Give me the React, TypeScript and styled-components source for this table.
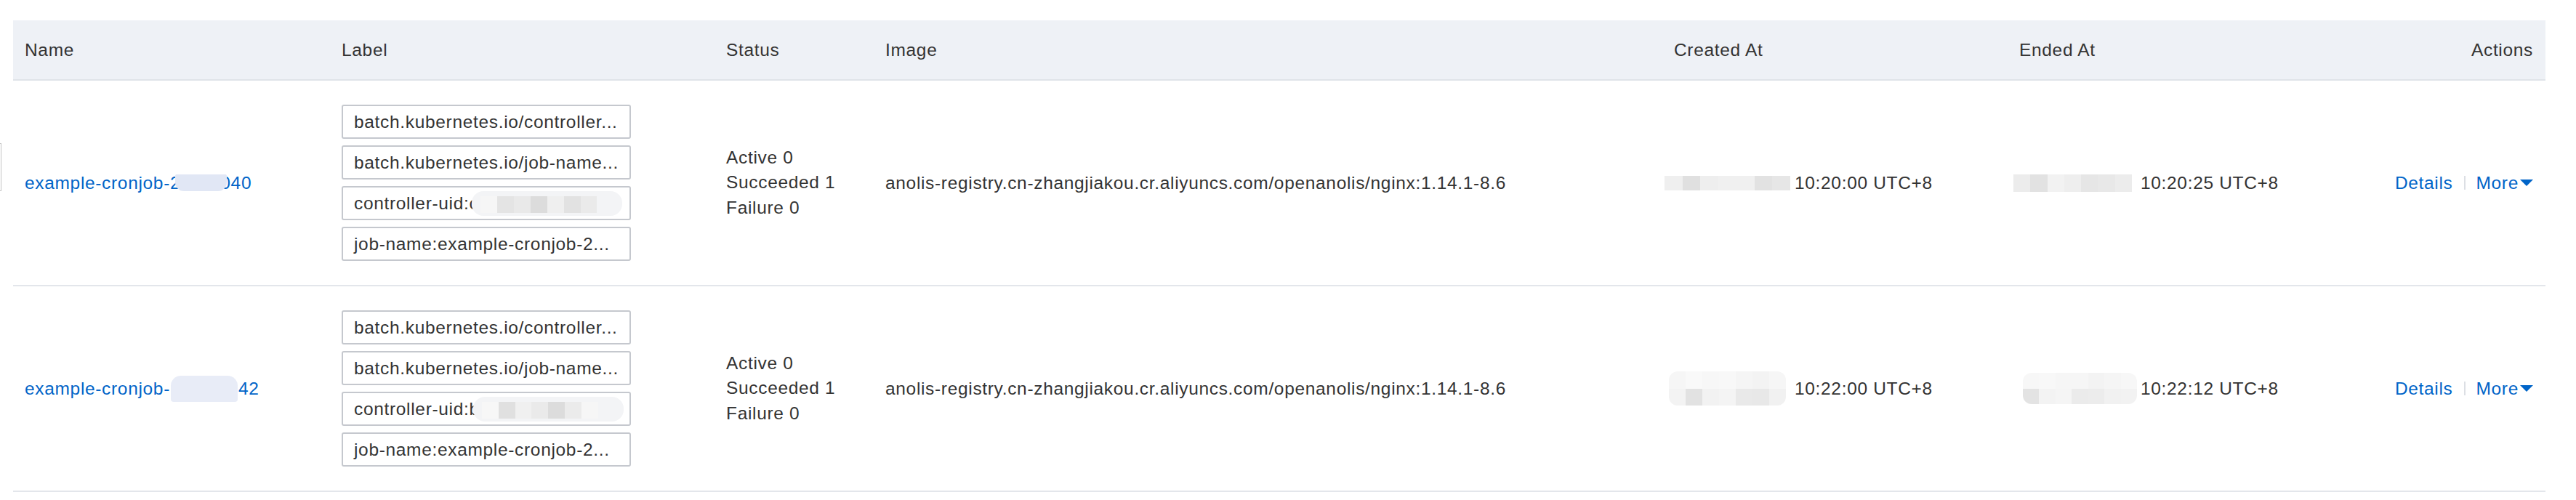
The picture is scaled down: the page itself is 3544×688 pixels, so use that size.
import styled, { createGlobalStyle } from "styled-components"

const COLS = "436px 529px 219px 1085px 475px 1fr 240px"

type Shade = string[][]

type MosaicProps = {
  w: number
  h: number
  rows: Shade
  bg?: string
  radius?: string
  pad?: string
  ml?: number
  mr?: number
}

const Mosaic = ({ w, h, rows, bg = "transparent", radius = "0", pad = "0", ml = 0, mr = 0 }: MosaicProps) => (
  <MosaicBox $w={w} $h={h} $bg={bg} $r={radius} $pad={pad} $ml={ml} $mr={mr}>
    {rows.map((row, i) => (
      <MosaicRow key={i}>
        {row.map((c, j) => (
          <Tile key={j} $c={c} />
        ))}
      </MosaicRow>
    ))}
  </MosaicBox>
)

type Job = {
  prefix: string
  suffix: string
  nameBlur: { w: number; h: number; color: string; radius: string; ml: number; mr: number }
  uidChar: string
  uidTiles: string[]
  created: string
  createdBlur: MosaicProps
  createdGap: number
  ended: string
  endedBlur: MosaicProps
  endedGap: number
}

const jobs: Job[] = [
  {
    prefix: "example-cronjob-2",
    suffix: "040",
    nameBlur: { w: 71, h: 23, color: "#e1e7f5", radius: "2px 2px 12px 12px", ml: -7, mr: -9 },
    uidChar: "c",
    uidTiles: ["#f6f6f6", "#e4e4e4", "#e9e9e9", "#dcdcdc", "#efefef", "#e2e2e2", "#eaeaea"],
    created: "10:20:00 UTC+8",
    createdBlur: {
      w: 173,
      h: 20,
      ml: -13,
      rows: [["#efefef", "#e0e0e0", "#eeeeee", "#f0f0f0", "#f0f0f0", "#e2e2e2", "#e6e6e6"]],
    },
    createdGap: 6,
    ended: "10:20:25 UTC+8",
    endedBlur: {
      w: 163,
      h: 24,
      ml: -8,
      rows: [["#ececec", "#e2e2e2", "#f2f2f2", "#eeeeee", "#e6e6e6", "#e8e8e8", "#ececec"]],
    },
    endedGap: 12,
  },
  {
    prefix: "example-cronjob-",
    suffix: "42",
    nameBlur: { w: 92, h: 36, color: "#e8ecf7", radius: "14px 14px 4px 4px", ml: 1, mr: 1 },
    uidChar: "b",
    uidTiles: ["#f7f7f7", "#e0e0e0", "#f0f0f0", "#eaeaea", "#dcdcdc", "#ebebeb", "#f6f6f6"],
    created: "10:22:00 UTC+8",
    createdBlur: {
      w: 161,
      h: 47,
      ml: -7,
      radius: "12px",
      rows: [
        ["#f6f6f6", "#f9f9f9", "#f7f7f7", "#f8f8f8", "#f5f5f5", "#f3f3f3", "#f6f6f6"],
        ["#f3f3f3", "#e2e2e2", "#f2f2f2", "#f4f4f4", "#e9e9e9", "#e8e8e8", "#f1f1f1"],
      ],
    },
    createdGap: 12,
    ended: "10:22:12 UTC+8",
    endedBlur: {
      w: 157,
      h: 43,
      ml: 5,
      radius: "12px",
      rows: [
        ["#f7f7f7", "#f8f8f8", "#f6f6f6", "#f6f6f6", "#f3f3f3", "#f5f5f5", "#f7f7f7"],
        ["#e3e3e3", "#f3f3f3", "#f5f5f5", "#ebebeb", "#ececec", "#f1f1f1", "#f2f2f2"],
      ],
    },
    endedGap: 5,
  },
]

const labelsFor = () => ["batch.kubernetes.io/controller...", "batch.kubernetes.io/job-name..."]

const App = () => {
  return (
    <Page>
      <GlobalStyle />
      <EdgeMark />
      <Table>
        <HeadRow>
          <HeadCell>Name</HeadCell>
          <HeadCell>Label</HeadCell>
          <HeadCell>Status</HeadCell>
          <HeadCell>Image</HeadCell>
          <HeadCell>Created At</HeadCell>
          <HeadCell>Ended At</HeadCell>
          <HeadCell $right>Actions</HeadCell>
        </HeadRow>

        {jobs.map((job, i) => (
          <Row key={i}>
            <Cell>
              <NameLink>
                {job.prefix}
                <Mosaic
                  w={job.nameBlur.w}
                  h={job.nameBlur.h}
                  radius={job.nameBlur.radius}
                  ml={job.nameBlur.ml}
                  mr={job.nameBlur.mr}
                  rows={[[job.nameBlur.color]]}
                />
                {job.suffix}
              </NameLink>
            </Cell>

            <Cell>
              <LabelStack>
                {labelsFor().map((l) => (
                  <LabelTag key={l}>{l}</LabelTag>
                ))}
                <LabelTag>
                  controller-uid:{job.uidChar}
                  <Mosaic w={207} h={34} bg="#f3f4f6" radius="16px" pad="7px 35px 4px 12px" ml={-9} rows={[job.uidTiles]} />
                </LabelTag>
                <LabelTag>job-name:example-cronjob-2...</LabelTag>
              </LabelStack>
            </Cell>

            <Cell>
              <StatusList>
                <div>Active 0</div>
                <div>Succeeded 1</div>
                <div>Failure 0</div>
              </StatusList>
            </Cell>

            <Cell>anolis-registry.cn-zhangjiakou.cr.aliyuncs.com/openanolis/nginx:1.14.1-8.6</Cell>

            <Cell>
              <TimeStamp $gap={job.createdGap}>
                <Mosaic {...job.createdBlur} />
                {job.created}
              </TimeStamp>
            </Cell>

            <Cell>
              <TimeStamp $gap={job.endedGap}>
                <Mosaic {...job.endedBlur} />
                {job.ended}
              </TimeStamp>
            </Cell>

            <Cell $right>
              <Actions>
                <ActionLink>Details</ActionLink>
                <Divider />
                <ActionLink>
                  More
                  <Caret viewBox="0 0 18 9">
                    <polygon points="0,0 18,0 9,9" fill="currentColor" />
                  </Caret>
                </ActionLink>
              </Actions>
            </Cell>
          </Row>
        ))}
      </Table>
    </Page>
  )
}

export default App

const GlobalStyle = createGlobalStyle`
  html, body {
    margin: 0;
    padding: 0;
    background: #fff;
  }
  body {
    font-family: "Liberation Sans", Arial, sans-serif;
    font-size: 24.5px;
    letter-spacing: 0.67px;
    color: #333;
  }
`

const Page = styled.div`
  position: relative;
  width: 3544px;
  box-sizing: border-box;
  padding: 28px 42px 11px 18px;
`

const EdgeMark = styled.div`
  position: absolute;
  left: 0;
  top: 197px;
  width: 1px;
  height: 64px;
  border: 1px solid #c4c4c4;
  border-left: none;
`

const Table = styled.div`
  width: 100%;
`

const HeadRow = styled.div`
  display: grid;
  grid-template-columns: ${COLS};
  align-items: center;
  height: 81px;
  background: #eef1f6;
  border-bottom: 2px solid #dfe3e9;
`

const HeadCell = styled.div<{ $right?: boolean }>`
  padding: 0 ${(p) => (p.$right ? "17px" : "16px")};
  text-align: ${(p) => (p.$right ? "right" : "left")};
  white-space: nowrap;
`

const Row = styled.div`
  display: grid;
  grid-template-columns: ${COLS};
  align-items: center;
  height: 281px;
  border-bottom: 2px solid #e3e6eb;
`

const Cell = styled.div<{ $right?: boolean }>`
  display: flex;
  justify-content: ${(p) => (p.$right ? "flex-end" : "flex-start")};
  align-items: center;
  padding: 0 ${(p) => (p.$right ? "17px" : "16px")};
  white-space: nowrap;
`

const NameLink = styled.a`
  display: flex;
  align-items: center;
  color: #0064c8;
  cursor: pointer;
`

const LabelStack = styled.div`
  display: flex;
  flex-direction: column;
  gap: 9px;
`

const LabelTag = styled.div`
  display: flex;
  align-items: center;
  width: 398px;
  height: 47px;
  box-sizing: border-box;
  padding: 0 15px;
  border: 2px solid #c5c8ce;
  border-radius: 3px;
  overflow: hidden;
  white-space: nowrap;
`

const StatusList = styled.div`
  line-height: 34.5px;
`

const TimeStamp = styled.div<{ $gap: number }>`
  display: flex;
  align-items: center;
  gap: ${(p) => p.$gap}px;
`

const Actions = styled.div`
  display: flex;
  align-items: center;
  gap: 15px;
`

const ActionLink = styled.a`
  display: flex;
  align-items: center;
  gap: 2px;
  color: #0064c8;
  cursor: pointer;
`

const Divider = styled.span`
  width: 2px;
  height: 19px;
  background: #dcdfe4;
`

const Caret = styled.svg`
  width: 18px;
  height: 9px;
`

const MosaicBox = styled.span<{
  $w: number
  $h: number
  $bg: string
  $r: string
  $pad: string
  $ml: number
  $mr: number
}>`
  position: relative;
  z-index: 1;
  flex: none;
  display: flex;
  flex-direction: column;
  box-sizing: border-box;
  width: ${(p) => p.$w}px;
  height: ${(p) => p.$h}px;
  padding: ${(p) => p.$pad};
  margin-left: ${(p) => p.$ml}px;
  margin-right: ${(p) => p.$mr}px;
  background: ${(p) => p.$bg};
  border-radius: ${(p) => p.$r};
  overflow: hidden;
`

const MosaicRow = styled.span`
  display: flex;
  flex: 1;
`

const Tile = styled.span<{ $c: string }>`
  flex: 1;
  background: ${(p) => p.$c};
`
